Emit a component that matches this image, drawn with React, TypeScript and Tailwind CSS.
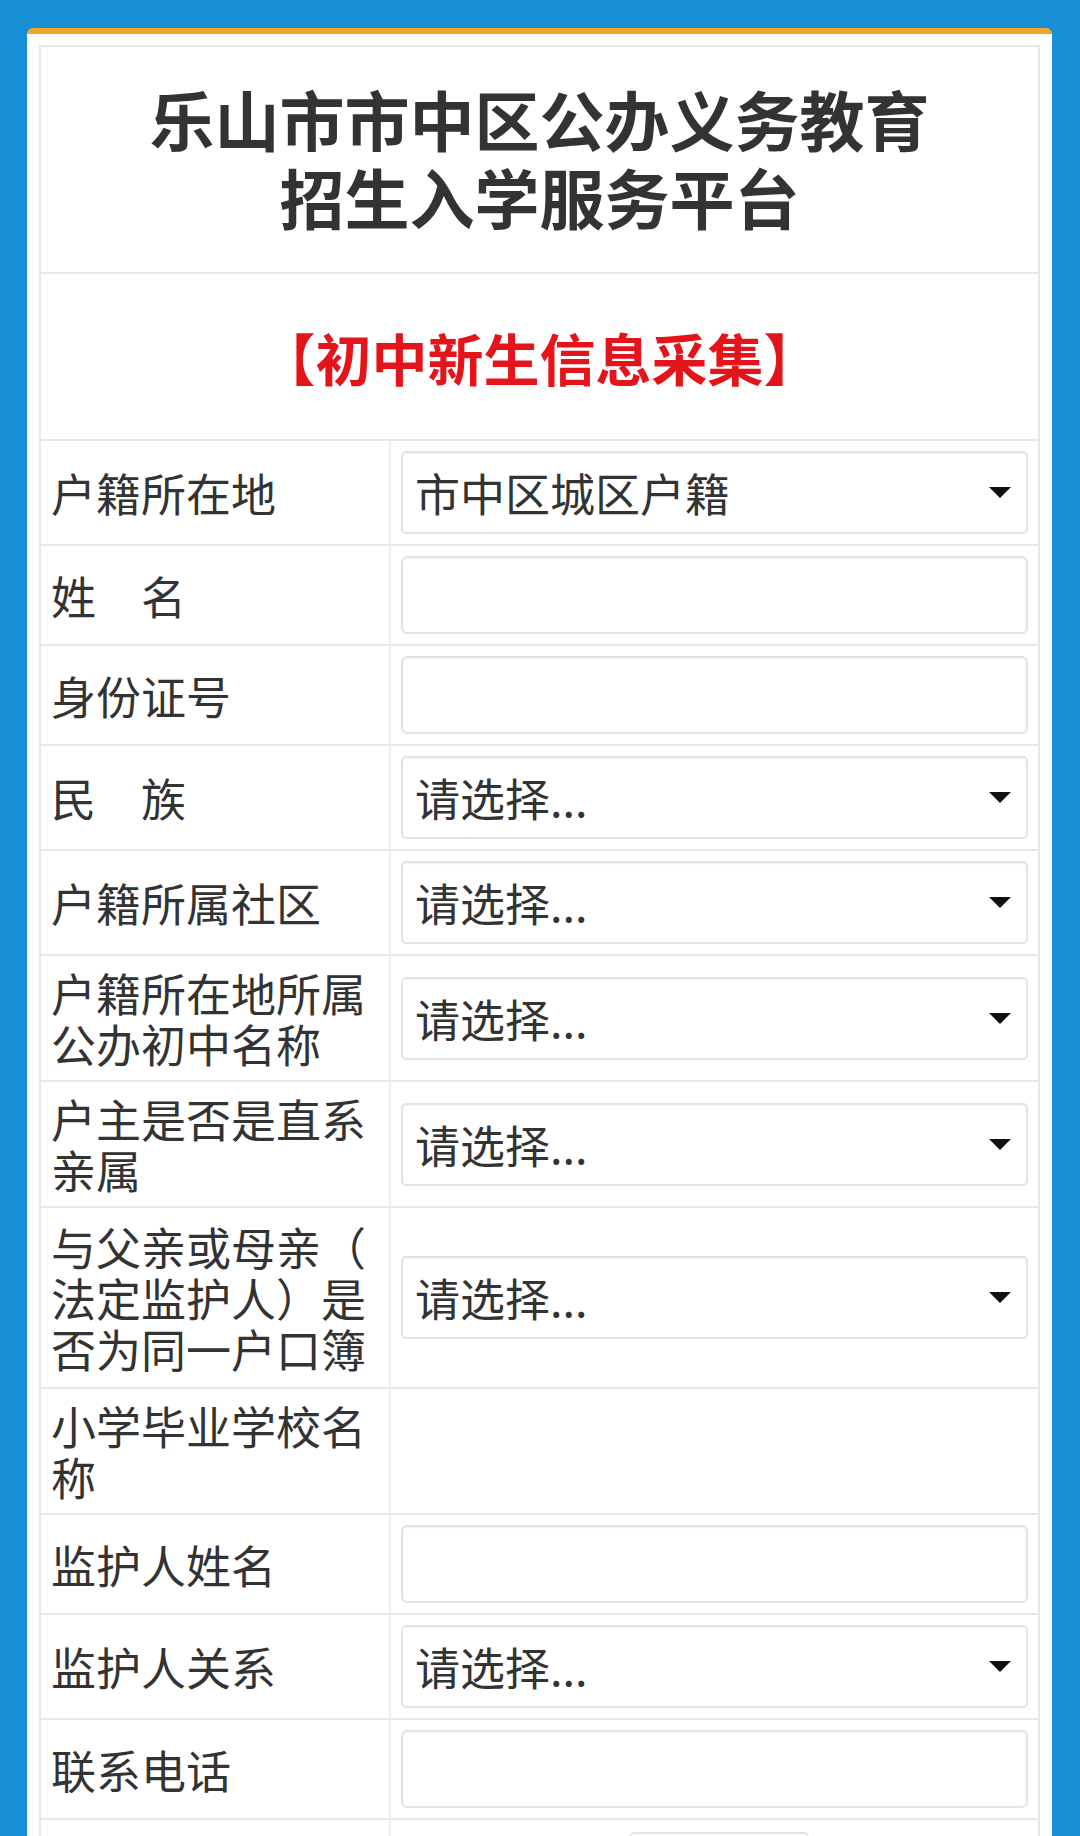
import type { ReactNode } from "react";

const font = { fontFamily: '"Noto Sans CJK SC", "Noto Sans", sans-serif' };

function Arrow() {
  return (
    <svg width="22" height="11" viewBox="0 0 22 11" className="shrink-0">
      <path d="M0 0 L22 0 L11 11 Z" fill="#111" />
    </svg>
  );
}

function SelectBox({ value }: { value: string }) {
  return (
    <div className="flex h-[83px] w-full items-center justify-between rounded-[5px] border-2 border-[#e3e3e3] bg-white pl-[12px] pr-[15px] shadow-[inset_0_1px_2px_rgba(0,0,0,0.04)]">
      <span className="text-[45px] leading-none text-[#333]">{value}</span>
      <Arrow />
    </div>
  );
}

function InputBox() {
  return <div className="h-[78px] w-full rounded-[6px] border-2 border-[#e3e3e3] bg-white shadow-[inset_0_1px_2px_rgba(0,0,0,0.05)]" />;
}

function Row({ label, children, pad = "py-[10px]" }: { label: ReactNode; children?: ReactNode; pad?: string }) {
  return (
    <div className="flex border-b-2 border-[#e8e8e8]">
      <div className={`flex w-[350px] shrink-0 items-center border-r-2 border-[#ececec] pl-[10px] pr-[10px] ${pad} text-[45px] leading-[51px] text-[#333]`}>
        <div>{label}</div>
      </div>
      <div className="flex flex-1 items-center px-[10px] py-[10px]">{children}</div>
    </div>
  );
}

export default function App() {
  const pick = "请选择...";
  return (
    <div className="min-h-screen bg-[#168fd5] pl-[27px] pr-[28px] pt-[28px]" style={font}>
      <div className="rounded-t-[6px] border-t-[6px] border-[#f0a62c] bg-white px-[12px] pt-[11px]">
        <div className="border-x-2 border-t-2 border-[#e8e8e8]">
          {/* 标题 */}
          <div className="border-b-2 border-[#e8e8e8] pb-[37px] pt-[32px] text-center text-[65px] font-bold leading-[78px] text-[#333]">
            <div>乐山市市中区公办义务教育</div>
            <div>招生入学服务平台</div>
          </div>
          <div className="flex h-[167px] items-center justify-center border-b-2 border-[#e8e8e8] text-[56px] font-bold text-[#e5141b]">
            【初中新生信息采集】
          </div>

          {/* 表单 */}
          <Row label="户籍所在地">
            <SelectBox value="市中区城区户籍" />
          </Row>
          <Row label="姓　名">
            <InputBox />
          </Row>
          <Row label="身份证号">
            <InputBox />
          </Row>
          <Row label="民　族">
            <SelectBox value={pick} />
          </Row>
          <Row label="户籍所属社区">
            <SelectBox value={pick} />
          </Row>
          <Row label={<>户籍所在地所属<br />公办初中名称</>} pad="py-[11px]">
            <SelectBox value={pick} />
          </Row>
          <Row label={<>户主是否是直系<br />亲属</>} pad="py-[11px]">
            <SelectBox value={pick} />
          </Row>
          <Row label={<>与父亲或母亲（<br />法定监护人）是<br />否为同一户口簿</>} pad="py-[13px]">
            <SelectBox value={pick} />
          </Row>
          <Row label={<>小学毕业学校名<br />称</>} pad="py-[11px]" />
          <Row label="监护人姓名">
            <InputBox />
          </Row>
          <Row label="监护人关系">
            <SelectBox value={pick} />
          </Row>
          <Row label="联系电话">
            <InputBox />
          </Row>
          <div className="flex">
            <div className="w-[350px] shrink-0 border-r-2 border-[#ececec]" />
            <div className="flex flex-1 items-start gap-[4px] px-[10px] pt-[12px]">
              <span className="text-[28px] leading-[40px] text-[#999]">（小学学校）名称</span>
              <div className="h-[60px] w-[180px] rounded-[5px] border-2 border-[#e3e3e3]" />
            </div>
          </div>
          <div className="h-[200px]" />
        </div>
      </div>
    </div>
  );
}
